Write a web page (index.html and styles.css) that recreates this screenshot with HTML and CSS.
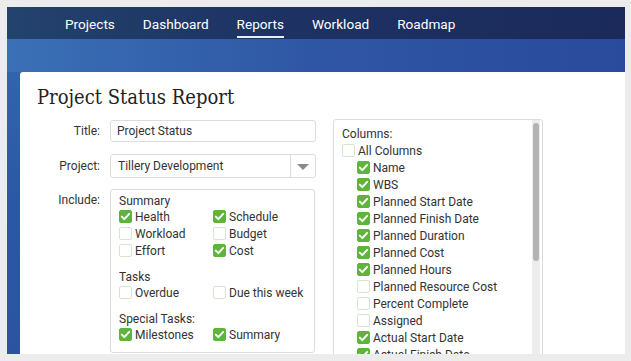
FILE: index.html
```html
<!DOCTYPE html>
<html>
<head>
<meta charset="utf-8">
<link rel="stylesheet" href="styles.css">
</head>
<body>
<div class="app">
  <nav class="nav">
    <a class="nav-item">Projects</a>
    <a class="nav-item">Dashboard</a>
    <a class="nav-item active">Reports</a>
    <a class="nav-item">Workload</a>
    <a class="nav-item">Roadmap</a>
  </nav>
  <div class="band"></div>
  <main class="card">
    <h1 class="title">Project Status Report</h1>
    <div class="body">
      <div class="form">
        <label class="lbl">Title:</label>
        <div class="input">Project Status</div>
        <label class="lbl">Project:</label>
        <div class="select"><span class="select-text">Tillery Development</span><span class="select-btn"><span class="tri"></span></span></div>
        <label class="lbl lbl-top">Include:</label>
        <div class="include">
          <div class="grp-head">Summary</div>
          <div class="grid2">
            <div class="cb on"><i></i>Health</div>
            <div class="cb on"><i></i>Schedule</div>
            <div class="cb"><i></i>Workload</div>
            <div class="cb"><i></i>Budget</div>
            <div class="cb"><i></i>Effort</div>
            <div class="cb on"><i></i>Cost</div>
          </div>
          <div class="grp-head gap">Tasks</div>
          <div class="grid2">
            <div class="cb"><i></i>Overdue</div>
            <div class="cb"><i></i>Due this week</div>
          </div>
          <div class="grp-head gap">Special Tasks:</div>
          <div class="grid2">
            <div class="cb on"><i></i>Milestones</div>
            <div class="cb on"><i></i>Summary</div>
          </div>
        </div>
      </div>
      <div class="columns">
        <div class="col-list">
          <div class="grp-head">Columns:</div>
          <div class="cb"><i></i>All Columns</div>
          <div class="sub">
            <div class="cb on"><i></i>Name</div>
            <div class="cb on"><i></i>WBS</div>
            <div class="cb on"><i></i>Planned Start Date</div>
            <div class="cb on"><i></i>Planned Finish Date</div>
            <div class="cb on"><i></i>Planned Duration</div>
            <div class="cb on"><i></i>Planned Cost</div>
            <div class="cb on"><i></i>Planned Hours</div>
            <div class="cb"><i></i>Planned Resource Cost</div>
            <div class="cb"><i></i>Percent Complete</div>
            <div class="cb"><i></i>Assigned</div>
            <div class="cb on"><i></i>Actual Start Date</div>
            <div class="cb on"><i></i>Actual Finish Date</div>
          </div>
        </div>
        <div class="scroll"><div class="thumb"></div></div>
      </div>
    </div>
  </main>
</div>
</body>
</html>
```
FILE: styles.css
```css
* { box-sizing: border-box; }
html, body { margin: 0; padding: 0; }
body {
  background: #ececec;
  font-family: Roboto, "Liberation Sans", sans-serif;
  color: #333;
}
.app {
  margin: 7px 6px 0 7px;
  height: 347px;
  overflow: hidden;
  display: flex;
  flex-direction: column;
  background: linear-gradient(180deg, #3569b1 0px, #2c57a6 200px, #2b53a2 348px);
}
.nav {
  height: 32px;
  flex: none;
  display: flex;
  align-items: center;
  gap: 28px;
  padding-left: 58px;
  background: linear-gradient(90deg, #23426c 0%, #1d3263 45%, #1b2a5a 100%);
}
.nav-item {
  color: #fff;
  font-size: 13.6px;
  line-height: 32px;
  height: 32px;
  padding-top: 1px;
  position: relative;
}
.nav-item.active::after {
  content: "";
  position: absolute;
  left: 0; right: 0; bottom: 1px;
  height: 2px;
  background: #e8eef8;
}
.band {
  height: 33px;
  flex: none;
  background: linear-gradient(90deg, #3a70b6 0%, #2f56a4 50%, #2a4a9c 100%);
}
.card {
  flex: 1;
  margin-left: 13px;
  background: #fff;
  border-radius: 3px 0 0 0;
  padding: 13px 0 0 17px;
  overflow: hidden;
}
.title {
  margin: 0;
  font-family: "DejaVu Serif Condensed", "DejaVu Serif", serif;
  font-stretch: condensed;
  font-weight: normal;
  font-size: 20px;
  line-height: 24px;
  color: #222;
}
.body {
  display: flex;
  align-items: flex-start;
  gap: 17px;
  margin-top: 11px;
}
.form {
  display: grid;
  grid-template-columns: 63px 206px;
  column-gap: 10px;
  row-gap: 11px;
  align-items: center;
}
.lbl {
  text-align: right;
  font-size: 12px;
}
.lbl-top { align-self: start; padding-top: 4px; }
.input {
  height: 22px;
  border: 1px solid #dcdcdc;
  border-radius: 3px;
  font-size: 12px;
  line-height: 20px;
  padding-left: 6px;
}
.select {
  height: 24px;
  margin-top: 1px;
  border: 1px solid #dcdcdc;
  border-radius: 3px;
  display: flex;
  font-size: 12px;
  line-height: 22px;
}
.select-text { flex: 1; padding-left: 7px; }
.select-btn {
  width: 25px;
  border-left: 1px solid #dcdcdc;
  display: flex;
  align-items: center;
  justify-content: center;
}
.tri {
  width: 0; height: 0;
  border-left: 6px solid transparent;
  border-right: 6px solid transparent;
  border-top: 6px solid #8a8a8a;
  margin-top: 1px;
}
.include {
  width: 205px;
  border: 1px solid #dcdcdc;
  border-radius: 3px;
  padding: 4px 0 9px 8px;
  font-size: 12px;
}
.grp-head { line-height: 15px; height: 15px; }
.include .grp-head { line-height: 14px; height: 14px; }
.include .grp-head.gap { margin-top: 11px; }
.grid2 {
  display: grid;
  grid-template-columns: 94px 1fr;
}
.cb {
  display: flex;
  align-items: center;
  gap: 3px;
  height: 17px;
  font-size: 12px;
  white-space: nowrap;
}
.cb i {
  width: 13px;
  height: 13px;
  flex: none;
  border: 1px solid #d6e6cc;
  border-radius: 2px;
  background: #fff;
}
.cb.on i {
  border-color: #5fb43c;
  background: #5fb43c url("data:image/svg+xml;utf8,<svg xmlns='http://www.w3.org/2000/svg' width='13' height='13' viewBox='0 0 13 13'><polyline points='2.8,6.6 5.3,9.1 10.2,3.9' fill='none' stroke='white' stroke-width='2' stroke-linecap='round' stroke-linejoin='round'/></svg>") center / 13px 13px no-repeat;
}
.columns {
  width: 210px;
  height: 260px;
  margin-top: -1px;
  border: 1px solid #dcdcdc;
  border-radius: 3px;
  display: flex;
  flex: none;
}
.col-list {
  flex: 1;
  padding: 7px 0 0 8px;
  font-size: 12px;
}
.sub { padding-left: 15px; }
.scroll {
  width: 8px;
  margin-right: 2px;
  background: #ededed;
  padding: 3px 1px 0 1px;
}
.thumb {
  height: 138px;
  background: #b3b3b3;
  border-radius: 3px;
}
```
